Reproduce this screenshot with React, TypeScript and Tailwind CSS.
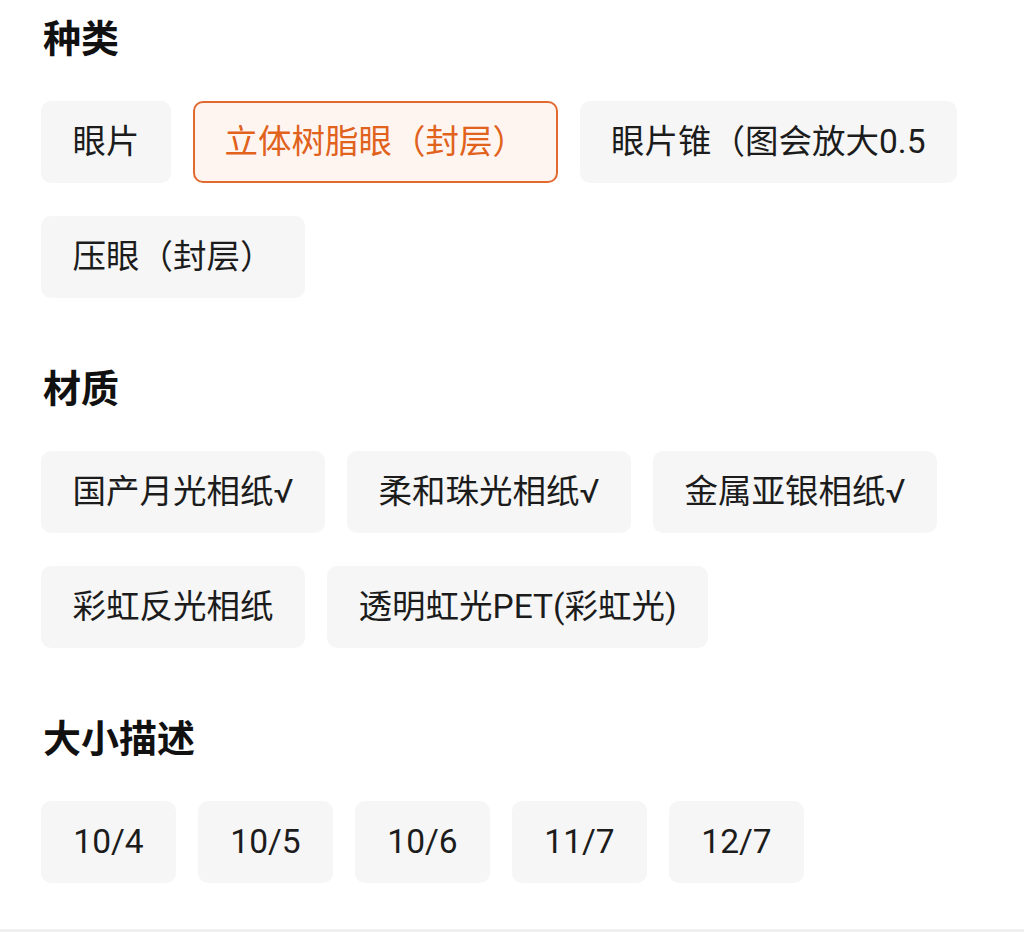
const FONT = "font-['Roboto','Noto_Sans_CJK_SC',sans-serif]";

type Section = {
  title: string;
  options: string[];
  selected?: string;
  numeric?: boolean;
};

const SECTIONS: Section[] = [
  {
    title: "种类",
    options: ["眼片", "立体树脂眼（封层）", "眼片锥（图会放大0.5", "压眼（封层）"],
    selected: "立体树脂眼（封层）",
  },
  {
    title: "材质",
    options: ["国产月光相纸√", "柔和珠光相纸√", "金属亚银相纸√", "彩虹反光相纸", "透明虹光PET(彩虹光)"],
  },
  {
    title: "大小描述",
    options: ["10/4", "10/5", "10/6", "11/7", "12/7"],
    numeric: true,
  },
];

function Chip({ label, active, numeric }: { label: string; active?: boolean; numeric?: boolean }) {
  let cls =
    "flex h-[82px] items-center justify-center whitespace-nowrap rounded-[10px] text-[33.5px] ";
  if (active) {
    cls += "border-2 border-[#e2692f] bg-[#fff5f0] px-[29.5px] text-[#e0621c]";
  } else {
    cls += "bg-[#f6f6f6] px-[31.5px] text-[#1c1c1c]";
  }
  if (numeric) cls += " min-w-[135px]";
  return <button className={cls}>{label}</button>;
}

export default function App() {
  return (
    <div className={`relative h-[932px] w-full overflow-hidden bg-white ${FONT}`}>
      <div className="flex flex-col gap-[66px] px-[41px] pt-[14px]">
        {SECTIONS.map((s) => (
          <section key={s.title}>
            <h2 className="mb-[37px] h-[50px] pl-[2px] text-[38px] leading-[50px] font-bold text-[#111]">{s.title}</h2>
            <div className="flex flex-wrap gap-x-[22px] gap-y-[33px]">
              {s.options.map((o) => (
                <Chip key={o} label={o} active={o === s.selected} numeric={s.numeric} />
              ))}
            </div>
          </section>
        ))}
      </div>
      {/* bottom divider */}
      <div className="absolute bottom-0 left-0 h-[3px] w-full bg-[#f0f0f0]" />
    </div>
  );
}
